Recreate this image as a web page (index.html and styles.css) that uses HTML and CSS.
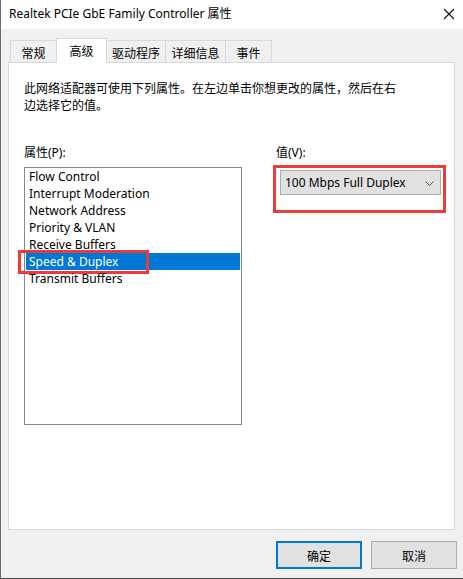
FILE: index.html
```html
<!DOCTYPE html>
<html lang="zh-CN">
<head>
<meta charset="utf-8">
<title>Realtek PCIe GbE Family Controller 属性</title>
<link rel="stylesheet" href="styles.css">
</head>
<body>
<div class="window">
  <div class="titlebar">
    <span class="title">Realtek PCIe GbE Family Controller 属性</span>
    <svg class="close" width="12" height="12" viewBox="0 0 12 12"><path d="M1 1L11 11M11 1L1 11" stroke="#111" stroke-width="1.1" fill="none"/></svg>
  </div>
  <div class="tabs">
    <div class="tab t1">常规</div>
    <div class="tab active t2">高级</div>
    <div class="tab t3">驱动程序</div>
    <div class="tab t4">详细信息</div>
    <div class="tab t5">事件</div>
  </div>
  <div class="panel">
    <p class="desc">此网络适配器可使用下列属性。在左边单击你想更改的属性，然后在右<br>边选择它的值。</p>
    <div class="columns">
      <div class="col-left">
        <div class="label">属性(P):</div>
        <div class="listbox">
          <div class="item">Flow Control</div>
          <div class="item">Interrupt Moderation</div>
          <div class="item">Network Address</div>
          <div class="item">Priority &amp; VLAN</div>
          <div class="item">Receive Buffers</div>
          <div class="item selected">Speed &amp; Duplex<span class="mark mark-item"></span></div>
          <div class="item">Transmit Buffers</div>
        </div>
      </div>
      <div class="col-right">
        <div class="label">值(V):</div>
        <div class="combo-wrap">
          <div class="combo">
            <span>100 Mbps Full Duplex</span>
            <svg class="chev" width="9" height="5" viewBox="0 0 9 5"><path d="M0.5 0.5L4.5 4.5L8.5 0.5" stroke="#555" stroke-width="1" fill="none"/></svg>
          </div>
          <span class="mark mark-combo"></span>
        </div>
      </div>
    </div>
  </div>
  <div class="buttons">
    <div class="btn default">确定</div>
    <div class="btn">取消</div>
  </div>
</div>
</body>
</html>
```
FILE: styles.css
```css
html, body {
  margin: 0;
  padding: 0;
  background: #f0f0f0;
}
body {
  font-family: "Noto Sans", "Noto Sans CJK SC", sans-serif;
  font-size: 12px;
  color: #000;
}
.window {
  width: 463px;
  height: 579px;
  box-sizing: border-box;
  border-left: 1px solid #6c6c6c;
  border-bottom: 1px solid #4a4a4a;
  background: #f0f0f0;
  display: flex;
  flex-direction: column;
}
.titlebar {
  height: 29px;
  background: #fff;
  display: flex;
  align-items: center;
  justify-content: space-between;
  padding: 0 8px 3px 8px;
  box-sizing: border-box;
}
.title {
  font-size: 12px;
  color: #000;
}
.close {
  margin-right: 0;
  margin-top: 2px;
}
.tabs {
  display: flex;
  align-items: flex-end;
  margin-top: 9px;
  padding-left: 9px;
  position: relative;
  z-index: 1;
}
.tab {
  height: 22px;
  box-sizing: border-box;
  border: 1px solid #d9d9d9;
  border-bottom: none;
  border-right: none;
  background: #f0f0f0;
  display: flex;
  align-items: center;
  justify-content: center;
  font-family: "Noto Sans CJK SC", sans-serif;
  padding-top: 1px;
}
.tab:last-child { border-right: 1px solid #d9d9d9; }
.t1 { width: 46px; }
.t2 { width: 51px; }
.t3 { width: 58px; }
.t4 { width: 60px; }
.t5 { width: 47px; }
.tab.active {
  height: 25px;
  background: #fff;
  border-right: 1px solid #d9d9d9;
  margin-bottom: -1px;
  padding-bottom: 3px;
}
.tab.active + .tab { border-left: none; }
.panel {
  margin-left: 7px;
  width: 447px;
  height: 468px;
  box-sizing: border-box;
  border: 1px solid #d9d9d9;
  background: #fff;
  padding: 16px 0 0 15px;
}
.desc {
  margin: 0;
  line-height: 17px;
  font-family: "Noto Sans CJK SC", sans-serif;
}
.columns {
  display: flex;
  margin-top: 31px;
}
.label {
  line-height: 17px;
  height: 17px;
}
.col-left {
  width: 218px;
}
.listbox {
  margin-top: 6px;
  width: 218px;
  height: 258px;
  box-sizing: border-box;
  border: 1px solid #828790;
  padding: 0 1px;
  position: relative;
}
.item {
  height: 17px;
  line-height: 17px;
  padding-left: 3px;
  white-space: nowrap;
  position: relative;
}
.item.selected {
  background: #0078d7;
  color: #fff;
}
.mark {
  position: absolute;
  border: 3px solid #ea3a3c;
  box-sizing: border-box;
  pointer-events: none;
}
.mark-item {
  left: -8px;
  top: -3px;
  width: 131px;
  height: 24px;
}
.col-right {
  margin-left: 34px;
}
.combo-wrap {
  position: relative;
  margin-top: 9px;
  padding-left: 4px;
}
.combo {
  width: 161px;
  height: 25px;
  box-sizing: border-box;
  background: #e1e1e1;
  border: 1px solid #adadad;
  display: flex;
  align-items: center;
  justify-content: space-between;
  padding: 0 6px 0 4px;
}
.chev { margin-top: 1px; }
.mark-combo {
  left: -3px;
  top: -5px;
  width: 173px;
  height: 48px;
}
.buttons {
  display: flex;
  justify-content: flex-end;
  gap: 9px;
  margin-top: 11px;
  padding-right: 6px;
}
.btn {
  width: 86px;
  height: 28px;
  box-sizing: border-box;
  border: 1px solid #adadad;
  background: #e1e1e1;
  display: flex;
  align-items: center;
  justify-content: center;
  font-family: "Noto Sans CJK SC", sans-serif;
}
.btn.default {
  border: 2px solid #0078d7;
}
```
